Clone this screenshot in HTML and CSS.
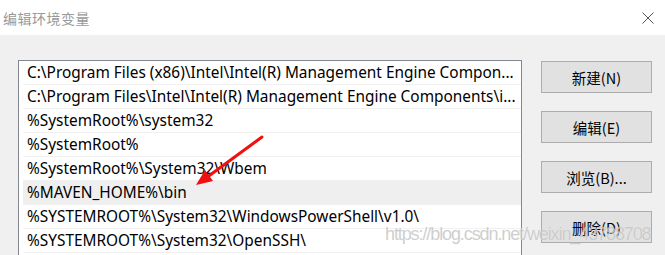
FILE: index.html
```html
<!DOCTYPE html>
<html lang="zh-CN">
<head>
    <meta charset="UTF-8">
    <title>编辑环境变量</title>
    <link rel="stylesheet" href="styles.css">
</head>
<body>
    <div class="titlebar">
        <span class="title">编辑环境变量</span>
        <svg class="close" width="12" height="12" viewBox="0 0 12 12">
            <path d="M0.5 0.5 L11.5 11.5 M11.5 0.5 L0.5 11.5" stroke="#555" stroke-width="1" fill="none"/>
        </svg>
    </div>

    <div class="content">
        <div class="path-list">
            <div class="row">C:\Program Files (x86)\Intel\Intel(R) Management Engine Compon...</div>
            <div class="row">C:\Program Files\Intel\Intel(R) Management Engine Components\i...</div>
            <div class="row">%SystemRoot%\system32</div>
            <div class="row">%SystemRoot%</div>
            <div class="row">%SystemRoot%\System32\Wbem</div>
            <div class="row selected">%MAVEN_HOME%\bin</div>
            <div class="row">%SYSTEMROOT%\System32\WindowsPowerShell\v1.0\</div>
            <div class="row">%SYSTEMROOT%\System32\OpenSSH\</div>
        </div>

        <div class="actions">
            <button>新建(N)</button>
            <button>编辑(E)</button>
            <button>浏览(B)...</button>
            <button>删除(D)</button>
        </div>
    </div>

    <!-- 标注箭头 -->
    <svg class="arrow" width="665" height="255" viewBox="0 0 665 255">
        <line x1="262" y1="137" x2="206" y2="178" stroke="#f01010" stroke-width="3" stroke-linecap="round"/>
        <polygon points="196,185 213,181 205,170" fill="#f01010"/>
    </svg>

    <div class="watermark">https://blog.csdn.net/weixin_43788708</div>
</body>
</html>
```

FILE: styles.css
```css
* {
    margin: 0;
    padding: 0;
    box-sizing: border-box;
}

body {
    width: 665px;
    height: 255px;
    overflow: hidden;
    position: relative;
    background: #f0f0f0;
    font-family: "Noto Sans", "Noto Sans CJK SC", sans-serif;
    color: #000;
}

.titlebar {
    height: 35px;
    background: #fff;
    display: flex;
    align-items: center;
    justify-content: space-between;
    padding: 0 11px 0 3px;
}

.title {
    font-family: "Noto Sans CJK SC", sans-serif;
    font-size: 14px;
    color: #999;
    letter-spacing: 0.5px;
}

.close {
    display: block;
}

.content {
    display: flex;
    align-items: flex-start;
    gap: 19px;
    padding: 25px 0 0 18px;
}

.path-list {
    width: 504px;
    height: 195px;
    border: 1px solid #828790;
    border-bottom: none;
    background: #fff;
    padding: 0 0 0 4px;
}

.row {
    height: 24px;
    line-height: 23px;
    border-bottom: 1px solid #f0f0f0;
    padding-left: 4px;
    font-size: 15.4px;
    white-space: nowrap;
    overflow: hidden;
}

.row.selected {
    background: #efefef;
}

.actions {
    display: flex;
    flex-direction: column;
    gap: 18px;
    padding-top: 1px;
}

.actions button {
    width: 111px;
    height: 32px;
    background: #e1e1e1;
    border: 1px solid #adadad;
    font-family: "Noto Sans CJK SC", sans-serif;
    font-size: 14.5px;
    color: #000;
}

.arrow {
    position: absolute;
    top: 0;
    left: 0;
    pointer-events: none;
}

.watermark {
    position: absolute;
    left: 385px;
    top: 224px;
    font-family: "Liberation Sans", Arial, sans-serif;
    font-size: 18px;
    letter-spacing: -1.1px;
    color: rgba(190, 190, 190, 0.75);
    text-shadow: 0 0 1px rgba(255, 255, 255, 0.6);
    white-space: nowrap;
    pointer-events: none;
}
```
